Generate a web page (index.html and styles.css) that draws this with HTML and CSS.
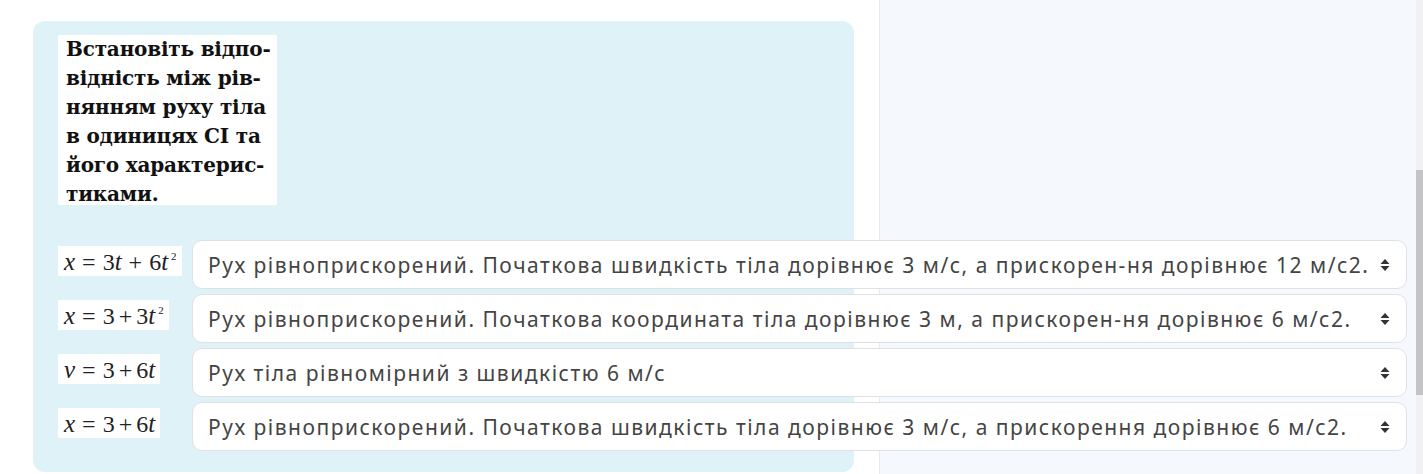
FILE: index.html
```html
<!DOCTYPE html>
<html lang="uk">
<head>
  <meta charset="UTF-8">
  <title>Відповідність</title>
  <link rel="stylesheet" href="styles.css">
</head>
<body>
  <div class="page">
    <div class="main">
      <div class="formulation">
        <div class="qtext">Встановіть відпо-<br>відність між рів-<br>нянням руху тіла<br>в одиницях СІ та<br>його характерис-<br>тиками.</div>

        <div class="answers">
          <div class="row">
            <div class="eq-cell"><span class="eq"><i>x</i><b>=</b>3<i>t</i><b>+</b>6<i>t</i><sup>2</sup></span></div>
            <div class="select-wrap">
              <select>
                <option>Рух рівноприскорений. Початкова швидкість тіла дорівнює 3 м/с, а прискорен-ня дорівнює 12 м/с2.</option>
              </select>
              <svg class="caret" width="10" height="14" viewBox="0 0 10 14"><path d="M5 1 L9.5 6 H0.5 Z M5 13 L9.5 8 H0.5 Z" fill="#333"/></svg>
            </div>
          </div>
          <div class="row">
            <div class="eq-cell"><span class="eq"><i>x</i><b>=</b>3<b class="tight">+</b>3<i>t</i><sup>2</sup></span></div>
            <div class="select-wrap">
              <select>
                <option>Рух рівноприскорений. Початкова координата тіла дорівнює 3 м, а прискорен-ня дорівнює 6 м/с2.</option>
              </select>
              <svg class="caret" width="10" height="14" viewBox="0 0 10 14"><path d="M5 1 L9.5 6 H0.5 Z M5 13 L9.5 8 H0.5 Z" fill="#333"/></svg>
            </div>
          </div>
          <div class="row">
            <div class="eq-cell"><span class="eq"><i>v</i><b>=</b>3<b class="tight">+</b>6<i>t</i></span></div>
            <div class="select-wrap">
              <select>
                <option>Рух тіла рівномірний з швидкістю 6 м/с</option>
              </select>
              <svg class="caret" width="10" height="14" viewBox="0 0 10 14"><path d="M5 1 L9.5 6 H0.5 Z M5 13 L9.5 8 H0.5 Z" fill="#333"/></svg>
            </div>
          </div>
          <div class="row">
            <div class="eq-cell"><span class="eq"><i>x</i><b>=</b>3<b class="tight">+</b>6<i>t</i></span></div>
            <div class="select-wrap">
              <select>
                <option>Рух рівноприскорений. Початкова швидкість тіла дорівнює 3 м/с, а прискорення дорівнює 6 м/с2.</option>
              </select>
              <svg class="caret" width="10" height="14" viewBox="0 0 10 14"><path d="M5 1 L9.5 6 H0.5 Z M5 13 L9.5 8 H0.5 Z" fill="#333"/></svg>
            </div>
          </div>
        </div>
      </div>
    </div>
    <div class="drawer"></div>
    <div class="scrollbar"><div class="thumb"></div></div>
  </div>
</body>
</html>
```
FILE: styles.css
```css
body {
  margin: 0;
  background: #fff;
  font-family: 'Noto Sans', sans-serif;
  overflow: hidden;
}
.page {
  display: flex;
  height: 474px;
}
.main {
  width: 846px;
  flex: none;
  padding: 21px 0 0 33px;
}
.formulation {
  width: 771px;
  height: 437px;
  background: #def2f8;
  border-radius: 12px;
  padding: 14px 25px 0 25px;
}
.qtext {
  display: inline-block;
  vertical-align: top;
  background: #fff;
  width: 219px;
  height: 170px;
  padding: 0 0 0 8px;
  box-sizing: border-box;
  overflow: hidden;
  white-space: nowrap;
  font-family: 'DejaVu Serif', serif;
  font-weight: bold;
  font-size: 20px;
  line-height: 29px;
  letter-spacing: -0.2px;
  color: #111;
}
.answers {
  margin-top: 35px;
  display: flex;
  flex-direction: column;
  gap: 5px;
}
.row {
  display: flex;
  align-items: flex-start;
}
.eq-cell {
  width: 134px;
  flex: none;
  padding-top: 6px;
}
.eq {
  display: inline-block;
  background: #fff;
  padding: 0 5px 0 6px;
  height: 30px;
  line-height: 31px;
  font-family: 'Liberation Serif', serif;
  font-size: 24px;
  color: #222;
  white-space: nowrap;
}
.eq i {
  font-size: 25px;
}
.eq b {
  font-weight: normal;
  margin: 0 7px;
}
.eq b.tight {
  margin: 0 4px;
}
.eq sup {
  font-size: 11px;
  vertical-align: 10px;
  line-height: 0;
  margin-left: 3px;
}
.select-wrap {
  position: relative;
  width: 1215px;
  flex: none;
}
select {
  appearance: none;
  -webkit-appearance: none;
  width: 100%;
  height: 49px;
  border: 1px solid #dee2e6;
  border-radius: 10px;
  background: #fff;
  padding: 0 28px 0 15px;
  font-family: 'Noto Sans', sans-serif;
  font-size: 21px;
  letter-spacing: 1.5px;
  color: #444;
}
.caret {
  position: absolute;
  right: 17px;
  top: 18px;
}
.drawer {
  flex: 1;
  background: #f5f8fd;
  border-left: 1px solid #e6eaf0;
}
.scrollbar {
  width: 7px;
  background: #f1f1f1;
  padding-top: 170px;
}
.thumb {
  height: 225px;
  background: #c4c4c4;
}
```
